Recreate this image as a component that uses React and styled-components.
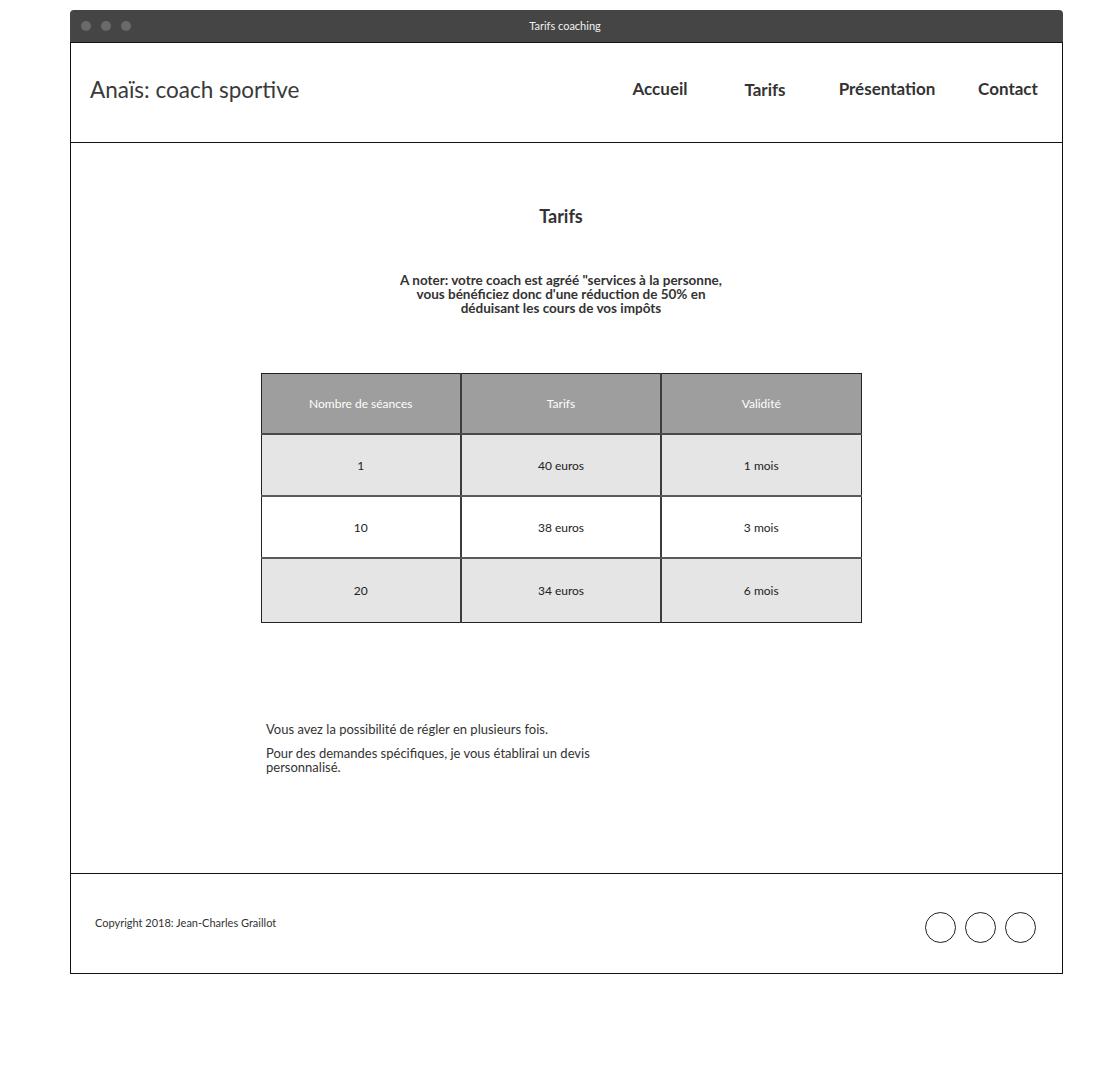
import React from 'react';
import styled, { createGlobalStyle } from 'styled-components';

const GlobalStyle = createGlobalStyle`
  body {
    margin: 0;
    background: #fff;
    font-family: Lato, "Liberation Sans", sans-serif;
    color: #333;
  }
`;

const Page = styled.div`
  padding: 10px 0 0 70px;
  width: 993px;
  height: 1074px;
`;

const TitleBar = styled.div`
  height: 32px;
  background: #454545;
  border-radius: 4px 4px 0 0;
  display: flex;
  align-items: center;
  padding-left: 11px;
  gap: 10px;
  position: relative;
`;

const Dot = styled.span`
  width: 10px;
  height: 10px;
  border-radius: 50%;
  background: #6a6a6a;
`;

const WindowTitle = styled.div`
  position: absolute;
  left: 0;
  right: 0;
  top: 0;
  line-height: 32px;
  text-align: center;
  color: #f2f2f2;
  font-size: 11px;
  padding-right: 3px;
`;

const Frame = styled.div`
  border: 1px solid #111;
  display: flex;
  flex-direction: column;
`;

const Header = styled.header`
  height: 99px;
  border-bottom: 1px solid #111;
  display: flex;
  align-items: center;
  justify-content: space-between;
  padding: 0 2px 0 19px;
`;

const Logo = styled.div`
  font-size: 22.5px;
  color: #3a3a3a;
  margin-bottom: 6px;
`;

const Nav = styled.nav`
  display: flex;
  align-items: center;
  margin-bottom: 8px;
`;

const NavItem = styled.a`
  width: ${p => p.$w}px;
  text-align: center;
  font-size: 17px;
  font-weight: 700;
  color: #333;
  margin-top: ${p => (p.$low ? 2 : 0)}px;
`;

const Main = styled.main`
  height: 730px;
  padding-left: 190px;
`;

const Column = styled.div`
  width: 600px;
  display: flex;
  flex-direction: column;
  align-items: center;
`;

const Heading = styled.h1`
  margin: 62px 0 0;
  font-size: 18px;
  line-height: 22px;
  font-weight: 700;
  color: #333;
`;

const Note = styled.p`
  margin: 46px 0 0;
  text-align: center;
  font-size: 13.5px;
  line-height: 14px;
  font-weight: 700;
  color: #333;
`;

const Table = styled.table`
  margin-top: 58px;
  width: 601px;
  border-collapse: collapse;
  border: 1px solid #222;
  table-layout: fixed;
`;

const HeadCell = styled.th`
  height: 57px;
  background: #9e9e9e;
  color: #fff;
  font-size: 12px;
  font-weight: 400;
  border-right: 2px solid #3c3c3c;
  border-bottom: 2px solid #4a4a4a;
  &:last-child { border-right: 1px solid #222; }
`;

const Row = styled.tr`
  background: ${p => (p.$shade ? '#e5e5e5' : '#fff')};
`;

const Cell = styled.td`
  height: 58px;
  text-align: center;
  font-size: 12px;
  color: #222;
  border-right: 2px solid #3c3c3c;
  border-bottom: 2px solid #5a5a5a;
  &:last-child { border-right: 1px solid #222; }
  tr:last-child > & { border-bottom: 1px solid #222; height: 61px; }
`;

const Info = styled.div`
  align-self: stretch;
  margin-top: 99px;
  padding-left: 5px;
  width: 350px;
`;

const Para = styled.p`
  margin: 0 0 10px;
  font-size: 13px;
  line-height: 14px;
  color: #333;
`;

const Footer = styled.footer`
  height: 99px;
  border-top: 1px solid #111;
  display: flex;
  align-items: center;
  justify-content: space-between;
  padding: 0 26px 0 24px;
`;

const Copyright = styled.div`
  font-size: 11px;
  color: #333;
  margin-bottom: 2px;
`;

const Socials = styled.div`
  display: flex;
  gap: 9px;
  margin-top: 7px;
`;

const Circle = styled.span`
  width: 29px;
  height: 29px;
  border: 1px solid #222;
  border-radius: 50%;
`;

const rows = [
  ['1', '40 euros', '1 mois'],
  ['10', '38 euros', '3 mois'],
  ['20', '34 euros', '6 mois'],
];

const App = () => (
  <Page>
    <GlobalStyle />
    <TitleBar>
      <Dot />
      <Dot />
      <Dot />
      <WindowTitle>Tarifs coaching</WindowTitle>
    </TitleBar>
    <Frame>
      <Header>
        <Logo>Anaïs: coach sportive</Logo>
        <Nav>
          <NavItem $w={104}>Accueil</NavItem>
          <NavItem $w={106} $low>Tarifs</NavItem>
          <NavItem $w={138}>Présentation</NavItem>
          <NavItem $w={104}>Contact</NavItem>
        </Nav>
      </Header>
      <Main>
        <Column>
          <Heading>Tarifs</Heading>
          <Note>
            A noter: votre coach est agréé "services à la personne,<br />
            vous bénéficiez donc d'une réduction de 50% en<br />
            déduisant les cours de vos impôts
          </Note>
          <Table>
            <thead>
              <tr>
                <HeadCell>Nombre de séances</HeadCell>
                <HeadCell>Tarifs</HeadCell>
                <HeadCell>Validité</HeadCell>
              </tr>
            </thead>
            <tbody>
              {rows.map((r, i) => (
                <Row key={r[0]} $shade={i !== 1}>
                  {r.map(c => <Cell key={c}>{c}</Cell>)}
                </Row>
              ))}
            </tbody>
          </Table>
          <Info>
            <Para>Vous avez la possibilité de régler en plusieurs fois.</Para>
            <Para>Pour des demandes spécifiques, je vous établirai un devis personnalisé.</Para>
          </Info>
        </Column>
      </Main>
      <Footer>
        <Copyright>Copyright 2018: Jean-Charles Graillot</Copyright>
        <Socials>
          <Circle />
          <Circle />
          <Circle />
        </Socials>
      </Footer>
    </Frame>
  </Page>
);

export default App;
